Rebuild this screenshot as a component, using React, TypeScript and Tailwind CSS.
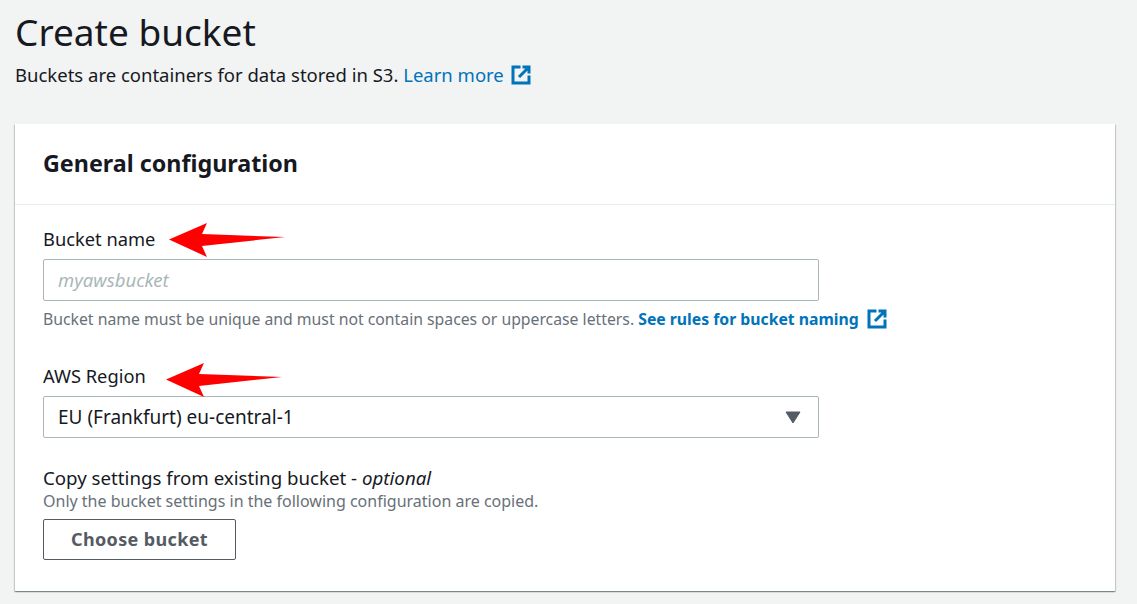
const font = "font-['Noto_Sans','Open_Sans',sans-serif]";

function ExternalIcon({ className }: { className?: string }) {
  return (
    <svg viewBox="0 0 20 20" className={className} fill="none" stroke="#0073bb" strokeWidth="3">
      <path d="M8 2H2v16h16v-6" strokeLinecap="square" />
      <path d="M11.5 2H18v6.5M17.5 2.5 8 12" />
    </svg>
  );
}

function Arrow({ className }: { className: string }) {
  return (
    <svg viewBox="0 0 118 34" className={className}>
      <path d="M0 16.5 38 0 33 11 116 14 33 23 38 34Z" fill="#ff0000" />
    </svg>
  );
}

export default function App() {
  return (
    <div className={`${font} h-[604px] w-[1137px] overflow-hidden bg-[#f2f3f3] pl-[15px] pr-[22px] text-[#16191f]`}>
      <h1 className="pt-[9px] text-[37px] leading-[46px] font-normal">Create bucket</h1>
      <p className="mt-[8px] flex items-center text-[18.5px] leading-[24px]">
        Buckets are containers for data stored in S3.&nbsp;
        <span className="text-[#0073bb]">Learn more</span>
        <ExternalIcon className="ml-[7px] h-[20px] w-[20px]" />
      </p>
      <section className="mt-[37px] h-[467px] bg-white shadow-[0_1px_1px_0_rgba(0,28,36,0.3),1px_1px_1px_0_rgba(0,28,36,0.15),-1px_1px_1px_0_rgba(0,28,36,0.15)]">
        <header className="flex h-[81px] items-center border-b border-[#eaeded] px-[28px] pb-[2px]">
          <h2 className="text-[23.3px] font-bold leading-[30px]">General configuration</h2>
        </header>
        <div className="px-[28px] pt-[22px]">
          <div className="relative">
            <label className="block text-[18.3px] leading-[24px]">Bucket name</label>
            <Arrow className="absolute left-[126px] top-[-4px] h-[34px] w-[118px]" />
          </div>
          <div className="mt-[8px] flex h-[42px] w-[776px] items-center rounded-[2px] border border-[#aab7b8] bg-white px-[14px] text-[18.5px] italic text-[#aab7b8]">
            myawsbucket
          </div>
          <p className="mt-[7px] flex items-center text-[15.78px] leading-[22px] text-[#687078]">
            Bucket name must be unique and must not contain spaces or uppercase letters.&nbsp;
            <span className="font-bold text-[#0073bb]">See rules for bucket naming</span>
            <ExternalIcon className="ml-[8px] h-[20px] w-[20px]" />
          </p>
          <div className="relative mt-[34px]">
            <label className="block text-[18.3px] leading-[24px]">AWS Region</label>
            <Arrow className="absolute left-[123px] top-[-1px] h-[34px] w-[118px]" />
          </div>
          <div className="mt-[8px] flex h-[42px] w-[776px] items-center justify-between rounded-[2px] border border-[#aab7b8] bg-white pl-[14px] pr-[17px] text-[19px]">
            EU (Frankfurt) eu-central-1
            <svg viewBox="0 0 16 13" className="h-[13px] w-[16px]">
              <path d="M1 1H15L8 12Z" fill="#545b64" stroke="#545b64" strokeLinejoin="round" />
            </svg>
          </div>
          <p className="mt-[28px] text-[18.7px] leading-[24px]">
            Copy settings from existing bucket - <i>optional</i>
          </p>
          <p className="mt-px text-[16px] leading-[20px] text-[#687078]">
            Only the bucket settings in the following configuration are copied.
          </p>
          <button className="mt-[8px] flex h-[41px] w-[193px] items-center justify-center rounded-[2px] border border-[#545b64] bg-white text-[18px] font-bold tracking-[0.35px] text-[#545b64]">
            Choose bucket
          </button>
        </div>
      </section>
    </div>
  );
}
